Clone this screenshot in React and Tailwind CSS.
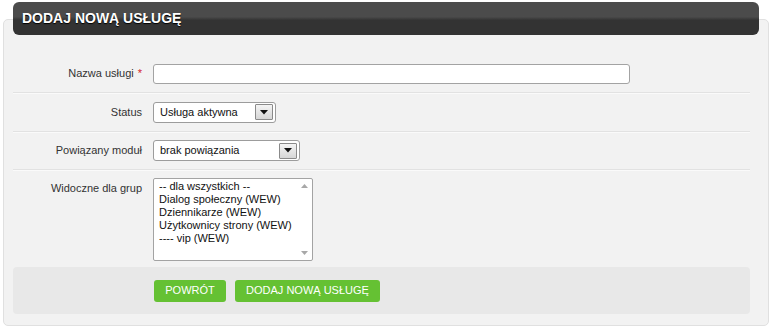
import React from 'react';

const font = { fontFamily: '"Liberation Sans", Arial, sans-serif' };

const Arrow = () => (
  <span className="flex h-[16px] w-[18px] items-center justify-center rounded-[1px] border border-[#8a8a8a] bg-gradient-to-b from-[#f4f4f4] to-[#d6d6d6]">
    <svg width="8" height="5" viewBox="0 0 8 5">
      <path d="M0 0h8L4 4.5z" fill="#111" />
    </svg>
  </span>
);

const Select = ({ value, width }) => (
  <div
    className={`flex h-[21px] ${width} items-center justify-between rounded-[3px] border border-[#9c9c9c] bg-white pl-[6px] pr-[2px] text-[11px] text-[#111]`}
  >
    <span>{value}</span>
    <Arrow />
  </div>
);

const Row = ({ label, required, className, children }) => (
  <div className={`flex items-center border-b border-[#e2e2e2] shadow-[0_1px_0_#fafafa] ${className}`}>
    <div className="w-[129px] shrink-0 text-right text-[11px] text-[#333]">
      {label}
      {required && <span className="ml-[4px] text-[#d2232a]">*</span>}
    </div>
    <div className="ml-[11px]">{children}</div>
  </div>
);

const groups = [
  '-- dla wszystkich --',
  'Dialog społeczny (WEW)',
  'Dziennikarze (WEW)',
  'Użytkownicy strony (WEW)',
  '---- vip (WEW)',
];

export default function App() {
  return (
    <div className="h-[332px] w-[771px] bg-white pt-[2px]" style={font}>
      <div className="relative z-10 mx-[13px] mr-[12px] flex h-[33px] items-center rounded-[6px] bg-gradient-to-b from-[#4b4b4b] from-45% to-[#333] to-55% pl-[9px]">
        <h1 className="text-[14px] font-bold text-white [text-shadow:0_1px_1px_#000]">
          DODAJ NOWĄ USŁUGĘ
        </h1>
      </div>
      <div className="mx-[3px] mr-[2px] -mt-[16px] h-[307px] rounded-[5px] border border-[#e0e0e0] bg-[#f2f2f2] pl-[9px] pr-[18px] pt-[35px]">
        <Row label="Nazwa usługi" required className="h-[38px]">
          <div className="h-[20px] w-[477px] rounded-[3px] border border-[#a3a3a3] bg-white" />
        </Row>
        <Row label="Status" className="h-[39px]">
          <Select value="Usługa aktywna" width="w-[123px]" />
        </Row>
        <Row label="Powiązany moduł" className="h-[38px]">
          <Select value="brak powiązania" width="w-[147px]" />
        </Row>
        <div className="flex items-start pt-[8px]">
          <div className="w-[129px] shrink-0 pt-[2px] text-right text-[11px] text-[#333]">Widoczne dla grup</div>
          <div className="ml-[11px] flex h-[83px] w-[160px] rounded-[2px] border border-[#a3a3a3] bg-white">
            <ul className="flex-1 whitespace-nowrap pl-[5px] pt-[1px] text-[11px] leading-[13px] text-[#111]">
              {groups.map((g) => (
                <li key={g}>{g}</li>
              ))}
            </ul>
            <div className="flex w-[16px] flex-col items-center justify-between py-[5px]">
              <svg width="7" height="4" viewBox="0 0 7 4">
                <path d="M0 4L3.5 0L7 4z" fill="#a8a8a8" />
              </svg>
              <svg width="7" height="4" viewBox="0 0 7 4">
                <path d="M0 0h7L3.5 4z" fill="#a8a8a8" />
              </svg>
            </div>
          </div>
        </div>
        <div className="mt-[6px] flex h-[47px] items-center gap-[9px] rounded-[4px] bg-[#e8e8e8] pl-[141px]">
          <button className="h-[22px] w-[72px] rounded-[3px] bg-[#65c133] text-[11px] text-white">POWRÓT</button>
          <button className="h-[22px] w-[145px] rounded-[3px] bg-[#65c133] text-[11px] text-white">
            DODAJ NOWĄ USŁUGĘ
          </button>
        </div>
      </div>
    </div>
  );
}
